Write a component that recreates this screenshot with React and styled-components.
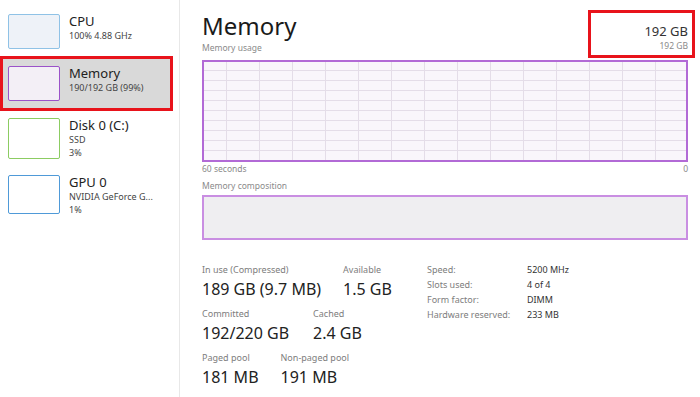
import React from 'react';
import styled, { createGlobalStyle } from 'styled-components';

const GlobalStyle = createGlobalStyle`
  html, body {
    margin: 0;
    padding: 0;
    background: #ffffff;
  }
  body {
    font-family: "Noto Sans", "Open Sans", sans-serif;
    color: #1f1f1f;
  }
`

const Window = styled.div`
  display: flex;
  width: 700px;
  height: 397px;
  overflow: hidden;
  background: #ffffff;
`

const Sidebar = styled.div`
  width: 180px;
  flex-shrink: 0;
  border-right: 1px solid #e8e8e8;
  padding-top: 4px;
  box-sizing: border-box;
`

const Item = styled.div`
  display: flex;
  align-items: flex-start;
  gap: 9px;
  width: 173px;
  height: ${props => props.h}px;
  box-sizing: border-box;
  padding: ${props => props.selected ? '7px 0 0 5px' : `${props.pt}px 0 0 8px`};
  background: ${props => props.selected ? '#d9d9d9' : 'transparent'};
  border: ${props => props.selected ? '3px solid #e8131b' : 'none'};
`

const Thumb = styled.div`
  width: 52px;
  height: ${props => props.h}px;
  box-sizing: border-box;
  border: 1.5px solid ${props => props.color};
  background: ${props => props.fill};
  border-radius: 2px;
  flex-shrink: 0;
`

const ItemText = styled.div`
  display: flex;
  flex-direction: column;
`

const ItemTitle = styled.div`
  font-size: 13px;
  line-height: 15px;
  color: #222;
`

const ItemSub = styled.div`
  font-size: 9px;
  line-height: 13px;
  color: #444;
  white-space: nowrap;
`

const Main = styled.div`
  flex: 1;
  padding: 10px 5px 0 22px;
  display: flex;
  flex-direction: column;
`

const Header = styled.div`
  display: flex;
  justify-content: space-between;
  align-items: flex-start;
`

const HeaderLeft = styled.div`
  display: flex;
  flex-direction: column;
`

const Title = styled.div`
  font-size: 24px;
  line-height: 32px;
  color: #1a1a1a;
`

const SmallLabel = styled.div`
  font-size: 8.5px;
  line-height: 12px;
  color: #8a8a8a;
  margin-top: ${props => props.mt || 0}px;
`

const Capacity = styled.div`
  display: flex;
  flex-direction: column;
  align-items: flex-end;
  width: 107px;
  height: 48px;
  box-sizing: border-box;
  border: 3px solid #e8131b;
  padding: 9px 4px 0 0;
`

const CapacityValue = styled.div`
  font-size: 13px;
  line-height: 18px;
  color: #333;
`

const Graph = styled.div`
  margin-top: 2px;
  width: 486px;
  height: 102px;
  box-sizing: border-box;
  border: 2px solid #b26ad6;
  background-color: #f9f6fb;
  background-image:
    linear-gradient(to right, #e4dde8 1px, transparent 1px),
    linear-gradient(to bottom, #e4dde8 1px, transparent 1px);
  background-size: 33px 100%, 100% 10px;
  background-position: 22px 0, 0 8px;
`

const AxisRow = styled.div`
  display: flex;
  justify-content: space-between;
  width: 486px;
  margin-top: 1px;
`

const Composition = styled.div`
  width: 486px;
  height: 45px;
  margin-top: 3px;
  box-sizing: border-box;
  border: 2px solid #c98ee2;
  background: #efeef1;
`

const Stats = styled.div`
  display: flex;
  align-items: flex-start;
  margin-top: 24px;
`

const StatsLeft = styled.div`
  display: flex;
  flex-direction: column;
  gap: 6px;
  width: 225px;
`

const StatRow = styled.div`
  display: flex;
  gap: ${props => props.gap}px;
`

const Stat = styled.div`
  display: flex;
  flex-direction: column;
`

const StatLabel = styled.div`
  font-size: 9px;
  line-height: 12px;
  color: #7d7d7d;
`

const StatValue = styled.div`
  font-size: 16px;
  line-height: 26px;
  color: #222;
  white-space: nowrap;
`

const Specs = styled.div`
  display: grid;
  grid-template-columns: 100px auto;
  row-gap: 3px;
  align-content: start;
  padding-top: 0;
`

const SpecLabel = styled.div`
  font-size: 9px;
  line-height: 12px;
  color: #7d7d7d;
  white-space: nowrap;
`

const SpecValue = styled.div`
  font-size: 9px;
  line-height: 12px;
  color: #333;
`

const devices = [
  { title: 'CPU', lines: ['100% 4.88 GHz'], color: '#8fc2e6', fill: '#eef2f8', h: 52, th: 35, pt: 10 },
  { title: 'Memory', lines: ['190/192 GB (99%)'], color: '#9b52c9', fill: '#f3eff6', h: 55, th: 35, selected: true },
  { title: 'Disk 0 (C:)', lines: ['SSD', '3%'], color: '#8ccc62', fill: '#ffffff', h: 57, th: 41, pt: 7 },
  { title: 'GPU 0', lines: ['NVIDIA GeForce G...', '1%'], color: '#4f9ad8', fill: '#ffffff', h: 57, th: 39, pt: 7 },
]

const stats = [
  { gap: 22, items: [['In use (Compressed)', '189 GB (9.7 MB)'], ['Available', '1.5 GB']] },
  { gap: 24, items: [['Committed', '192/220 GB'], ['Cached', '2.4 GB']] },
  { gap: 22, items: [['Paged pool', '181 MB'], ['Non-paged pool', '191 MB']] },
]

const specs = [
  ['Speed:', '5200 MHz'],
  ['Slots used:', '4 of 4'],
  ['Form factor:', 'DIMM'],
  ['Hardware reserved:', '233 MB'],
]

export default function App() {
  return (
    <Window>
      <GlobalStyle />
      <Sidebar>
        {devices.map(d => (
          <Item key={d.title} h={d.h} pt={d.pt} selected={d.selected}>
            <Thumb h={d.th} color={d.color} fill={d.fill} />
            <ItemText>
              <ItemTitle>{d.title}</ItemTitle>
              {d.lines.map(l => <ItemSub key={l}>{l}</ItemSub>)}
            </ItemText>
          </Item>
        ))}
      </Sidebar>
      <Main>
        <Header>
          <HeaderLeft>
            <Title>Memory</Title>
            <SmallLabel>Memory usage</SmallLabel>
          </HeaderLeft>
          <Capacity>
            <CapacityValue>192 GB</CapacityValue>
            <SmallLabel>192 GB</SmallLabel>
          </Capacity>
        </Header>
        <Graph />
        <AxisRow>
          <SmallLabel>60 seconds</SmallLabel>
          <SmallLabel>0</SmallLabel>
        </AxisRow>
        <SmallLabel mt={5}>Memory composition</SmallLabel>
        <Composition />
        <Stats>
          <StatsLeft>
            {stats.map((row, i) => (
              <StatRow key={i} gap={row.gap}>
                {row.items.map(([label, value]) => (
                  <Stat key={label}>
                    <StatLabel>{label}</StatLabel>
                    <StatValue>{value}</StatValue>
                  </Stat>
                ))}
              </StatRow>
            ))}
          </StatsLeft>
          <Specs>
            {specs.map(([label, value]) => (
              <React.Fragment key={label}>
                <SpecLabel>{label}</SpecLabel>
                <SpecValue>{value}</SpecValue>
              </React.Fragment>
            ))}
          </Specs>
        </Stats>
      </Main>
    </Window>
  );
}
